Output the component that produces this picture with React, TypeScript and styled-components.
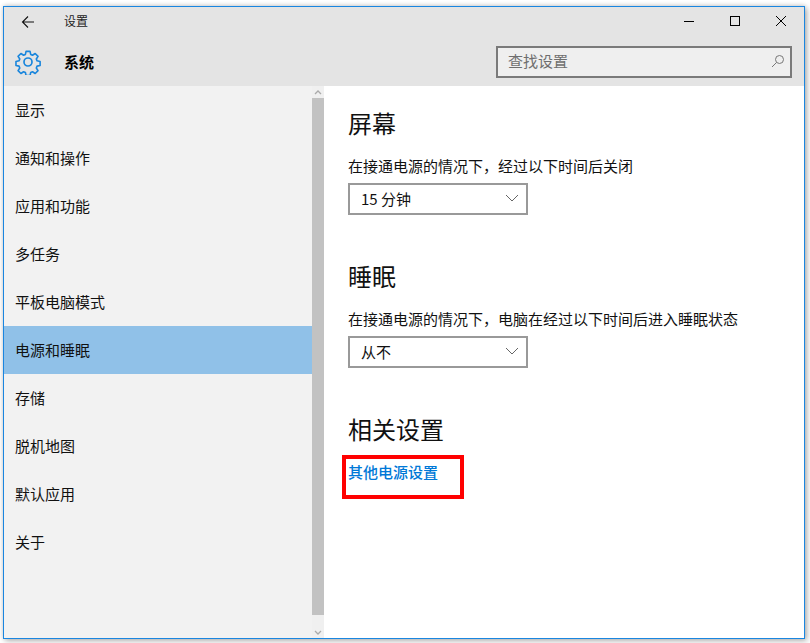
import React from "react";
import styled, { createGlobalStyle } from "styled-components";

const Global = createGlobalStyle`
  html, body { margin: 0; padding: 0; background: #fff; overflow: hidden; }
  body { font-family: "Noto Sans CJK SC", "Noto Sans", sans-serif; color: #000; }
  * { box-sizing: border-box; }
`;
const Stage = styled.div`
  width: 810px; height: 643px; padding: 6px 5px 4px 3px;
`;
const Win = styled.div`
  width: 802px; height: 633px; border: 1px solid #1a86e0; background: #fff;
  display: flex; flex-direction: column;
  box-shadow: 2px 2px 6px rgba(0,0,0,.3), 0 -1px 4px rgba(0,0,0,.12);
`;
const Header = styled.header`
  height: 79px; flex: none; background: #e4e4e4; display: flex; flex-direction: column;
`;
const TitleBar = styled.div`
  height: 30px; display: flex; align-items: center; padding-left: 17px;
`;
const IconSlot = styled.div`
  width: 14px; height: 14px; display: flex; margin-right: 29px;
`;
const Title = styled.span`
  font-size: 12px; line-height: 28px; height: 30px; color: #222;
`;
const Controls = styled.div`
  margin-left: auto; display: flex; height: 30px;
`;
const Ctl = styled.div`
  width: 46px; display: flex; align-items: center; justify-content: center;
`;
const SubBar = styled.div`
  flex: 1; display: flex; align-items: center; padding: 0 12px 0 11px;
`;
const GearSlot = styled.div`
  width: 26px; height: 26px; margin-right: 23px; display: flex;
`;
const SubTitle = styled.span`
  font-size: 15px; font-weight: 700; line-height: 20px;
`;
const Search = styled.div`
  margin-left: auto; margin-top: 1px; width: 296px; height: 32px; border: 2px solid #7a7a7a; background: #efefef;
  display: flex; align-items: center; justify-content: space-between; padding: 0 5px 3px 10px;
  font-size: 15px; color: #6e6e6e;
`;
const Body = styled.div`
  flex: 1; display: flex; min-height: 0;
`;
const Sidebar = styled.nav`
  width: 308px; background: #f2f2f2; display: flex; flex-direction: column;
`;
const NavItem = styled.div<{ $active?: boolean }>`
  height: 48px; flex: none; display: flex; align-items: center; padding: 0 0 2px 11px; font-size: 15px; color: #111;
  background: ${(p) => (p.$active ? "#90c1e8" : "transparent")};
`;
const Scroll = styled.div`
  width: 12px; background: #f0f0f0; display: flex; flex-direction: column; align-items: center;
`;
const Arrow = styled.div`
  height: 12px; width: 12px; flex: none; display: flex; align-items: center; justify-content: center;
`;
const Thumb = styled.div`
  width: 12px; height: 517px; background: #c2c2c2; flex: none;
`;
const Spacer = styled.div`
  flex: 1;
`;
const Main = styled.main`
  flex: 1; padding: 17px 0 0 24px; position: relative;
`;
const Section = styled.section`
  height: 153px;
`;
const H = styled.h2`
  margin: 0; font-size: 24px; font-weight: 400; line-height: 40px; color: #111;
`;
const Label = styled.div`
  font-size: 15px; line-height: 20px; margin-top: 13px; color: #111;
`;
const Select = styled.div`
  margin-top: 7px; width: 180px; height: 32px; border: 2px solid #999; display: flex; align-items: center;
  justify-content: space-between; padding: 0 7px 2px 11px; font-size: 15px; color: #111; background: #fff;
`;
const Link = styled.div`
  font-size: 15px; font-weight: 500; line-height: 20px; color: #0078d7; margin-top: 13px;
`;
const RedBox = styled.div`
  position: absolute; left: 18px; top: 369px; width: 122px; height: 44px; border: 4px solid #f00;
`;

const nav = ["显示", "通知和操作", "应用和功能", "多任务", "平板电脑模式", "电源和睡眠", "存储", "脱机地图", "默认应用", "关于"];

const Chevron = () => (
  <svg width="14" height="8" viewBox="0 0 14 8" fill="none" stroke="#666" strokeWidth="1"><path d="M1 1l6 6 6-6" /></svg>
);

const Gear = () => (
  <svg width="26" height="26" viewBox="0 0 26 26" fill="none" stroke="#1a86dc" strokeWidth="1.7" strokeLinejoin="round">
    <path d="M10.9 1.8h4.2l.7 3.2 1.9.8 2.8-1.8 3 3-1.8 2.8.8 1.9 3.2.7v4.2l-3.2.7-.8 1.9 1.8 2.8-3 3-2.8-1.8-1.9.8-.7 3.2h-4.2l-.7-3.2-1.9-.8-2.8 1.8-3-3 1.8-2.8-.8-1.9-3.2-.7v-4.2l3.2-.7.8-1.9-1.8-2.8 3-3 2.8 1.8 1.9-.8z" transform="translate(.7 .7) scale(.95)" />
    <circle cx="13" cy="13" r="4" />
  </svg>
);

export default function App() {
  return (
    <Stage>
      <Global />
      <Win>
        <Header>
          <TitleBar>
            <IconSlot>
              <svg width="14" height="14" viewBox="0 0 14 14" fill="none" stroke="#111" strokeWidth="1.1"><path d="M13 7H1.5M7 1.5L1.5 7 7 12.5" /></svg>
            </IconSlot>
            <Title>设置</Title>
            <Controls>
              <Ctl><svg width="12" height="12" viewBox="0 0 12 12" stroke="#000"><path d="M1 5.5h10" /></svg></Ctl>
              <Ctl><svg width="12" height="12" viewBox="0 0 12 12" fill="none" stroke="#000"><rect x="1.5" y=".5" width="9" height="9" /></svg></Ctl>
              <Ctl><svg width="12" height="12" viewBox="0 0 12 12" fill="none" stroke="#000"><path d="M1 0l10 10M11 0L1 10" /></svg></Ctl>
            </Controls>
          </TitleBar>
          <SubBar>
            <GearSlot><Gear /></GearSlot>
            <SubTitle>系统</SubTitle>
            <Search>
              <span>查找设置</span>
              <svg width="14" height="14" viewBox="0 0 14 14" fill="none" stroke="#777"><circle cx="8.5" cy="5.5" r="4" /><path d="M5.5 8.5L1 13" /></svg>
            </Search>
          </SubBar>
        </Header>
        <Body>
          <Sidebar>
            {nav.map((n) => (
              <NavItem key={n} $active={n === "电源和睡眠"}>{n}</NavItem>
            ))}
          </Sidebar>
          <Scroll>
            <Arrow><svg width="8" height="5" viewBox="0 0 8 5" fill="none" stroke="#aaa" strokeWidth="1.3"><path d="M1 4l3-3 3 3" /></svg></Arrow>
            <Thumb />
            <Spacer />
            <Arrow><svg width="8" height="5" viewBox="0 0 8 5" fill="none" stroke="#aaa" strokeWidth="1.3"><path d="M1 1l3 3 3-3" /></svg></Arrow>
          </Scroll>
          <Main>
            <Section>
              <H>屏幕</H>
              <Label>在接通电源的情况下，经过以下时间后关闭</Label>
              <Select><span>15 分钟</span><Chevron /></Select>
            </Section>
            <Section>
              <H>睡眠</H>
              <Label>在接通电源的情况下，电脑在经过以下时间后进入睡眠状态</Label>
              <Select><span>从不</span><Chevron /></Select>
            </Section>
            <Section>
              <H>相关设置</H>
              <Link>其他电源设置</Link>
            </Section>
            <RedBox />
          </Main>
        </Body>
      </Win>
    </Stage>
  );
}
